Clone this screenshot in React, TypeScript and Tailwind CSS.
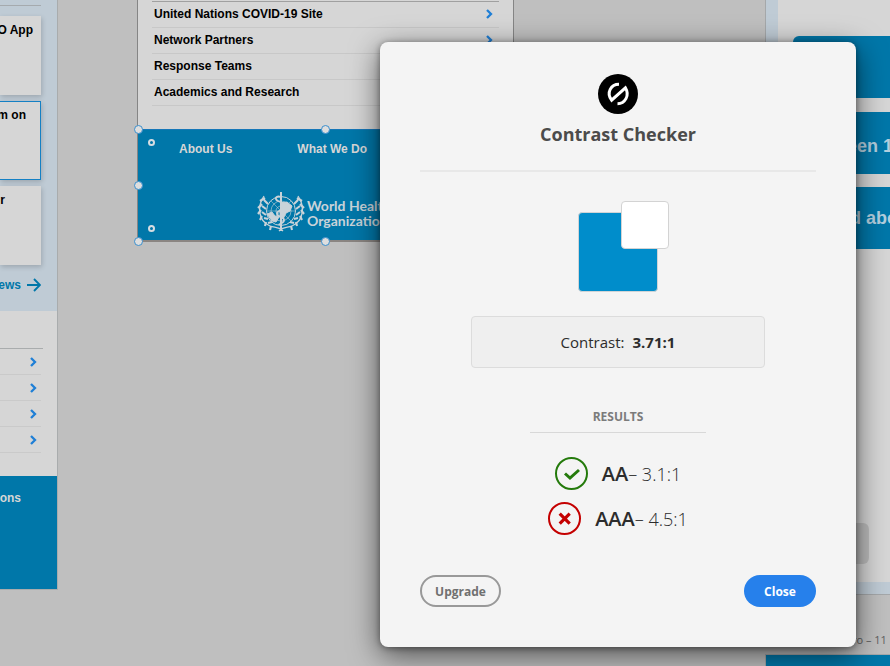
const newsCards = [
  { text: "O App", style: "pr-2 pt-[6px]" },
  { text: "m on", style: "border border-l-0 border-[#1480c4] pr-[14px] pt-[5px]" },
  { text: "r", style: "pr-9 pt-[6px]" },
];

const partnerLinks = [
  "United Nations COVID-19 Site",
  "Network Partners",
  "Response Teams",
  "Academics and Research",
];

const handles = [
  "-left-1 -top-[5px]",
  "-left-1 top-[51px]",
  "-left-1 top-[107px]",
  "left-[183px] -top-[5px]",
  "left-[183px] top-[107px]",
];

function Chevron() {
  return (
    <svg width="7" height="10" viewBox="0 0 7 10" fill="none" stroke="#1f7fd6" strokeWidth="2.3">
      <path d="M1 1L5 5L1 9" />
    </svg>
  );
}

function NewsArtboard() {
  return (
    <section className="absolute left-0 top-0 w-[58px] overflow-hidden border-b border-r border-[#a9acad] bg-[#d6d6d6] text-xs font-bold text-black">
      <div className="flex h-[311px] flex-col bg-[#bfcbd5] pr-4 pt-[5px]">
        <div className="mb-[10px] h-px shrink-0 bg-[#a5aaae]" />
        <div className="flex flex-col gap-[6px]">
          {newsCards.map((card) => (
            <article
              key={card.text}
              className={`flex h-[79px] justify-end whitespace-nowrap bg-[#d6d6d6] leading-4 shadow-[1px_2px_5px_#0000002e] ${card.style}`}
            >
              {card.text}
            </article>
          ))}
        </div>
        <a href="#news" className="mt-3 flex items-center justify-end gap-[6px] leading-4 text-[#0077a9]">
          ews
          <svg width="14" height="14" viewBox="0 0 14 14" fill="none" stroke="#0077a9" strokeWidth="1.9" className="shrink-0">
            <path d="M0 7H13M7 1L13 7L7 13" />
          </svg>
        </a>
      </div>
      <div className="h-[165px] pr-4 pt-[37px]">
        <div className="-mr-[2px] h-px bg-[#a9acad]" />
        {[1, 2, 3, 4].map((row) => (
          <div key={row} className="flex h-[26px] items-center justify-end border-b border-[#cacaca] pr-1">
            <Chevron />
          </div>
        ))}
      </div>
      <div className="flex h-[113px] justify-end bg-[#0077a9] pr-9 pt-[14px] leading-4 text-[#d6d6d6]">
        ons
      </div>
    </section>
  );
}

function Emblem() {
  return (
    <svg width="48" height="42" viewBox="0 0 48 42" fill="none" stroke="#c9d3d9" strokeWidth="1">
      <circle cx="24" cy="20" r="14.5" />
      <circle cx="24" cy="20" r="10" strokeOpacity=".6" />
      <circle cx="24" cy="20" r="5" strokeOpacity=".6" />
      <path d="M9.5 20H38.5M14 10L34 30M34 10L14 30" strokeOpacity=".5" />
      <path d="M10 23l5-2 3 4 4 1-3 5-4-1zM24 12l6-1 5 4-2 5-4 2-3 6-3-4z" fill="#c9d3d9" />
      <path d="M24 1V40" strokeWidth="2" />
      <path d="M24 6c-5-2-7 2-3 4s8 2 7 6-9 3-8 7 7 2 7 6-5 3-5 5" strokeWidth="1.8" />
      <path d="M7 5C0 15 1 30 13 35C18 37 21 35 26 40M41 5C48 15 47 30 35 35C30 37 27 35 22 40" strokeWidth="1.3" />
      <path
        d="M8 7L3 10M7 9L11 13M5 13L1 17M5 15L9 18M4 19L1 23M5 21L9 24M5 25L3 29M7 27L11 28M9 31L8 35M11 32L15 31M14 35L13 39M40 7L45 10M41 9L37 13M43 13L47 17M43 15L39 18M44 19L47 23M43 21L39 24M43 25L45 29M41 27L37 28M39 31L40 35M37 32L33 31M34 35L35 39"
        strokeWidth="2.1"
      />
    </svg>
  );
}

function PartnersArtboard() {
  return (
    <section className="absolute left-[137px] top-0 w-[377px] border-x border-[#858585] bg-[#d6d6d6]">
      <div className="h-[129px] px-[14px] pt-px">
        <ul className="border-t border-[#a0a0a0]">
          {partnerLinks.map((link) => (
            <li key={link} className="h-[26px] border-b border-[#c8c8c8]">
              <a href="#partners" className="flex h-full items-center justify-between pb-[2px] pl-[2px] pr-[6px] text-xs font-bold text-black">
                {link}
                <Chevron />
              </a>
            </li>
          ))}
        </ul>
      </div>
      <footer className="relative h-[113px] border-b-2 border-t border-b-[#8a8582] border-t-[#1677b8] bg-[#0077a9]">
        <nav className="flex gap-[65px] pl-[41px] pt-[11px] text-xs font-bold leading-4 text-[#d6d6d6]">
          <a href="#about">About Us</a>
          <a href="#work">What We Do</a>
        </nav>
        <div className="mt-[34px] flex items-center gap-[2px] pl-[119px]">
          <Emblem />
          <p className="whitespace-nowrap pt-[2px] font-['Lato',sans-serif] text-sm font-bold leading-[15px] text-[#c9d3d9]">
            World Health
            <br />
            Organization
          </p>
        </div>
        {handles.map((place) => (
          <span key={place} className={`absolute size-[9px] rounded-full border border-[#3a8fce] bg-[#dedede] ${place}`} />
        ))}
        <span className="absolute left-[10px] top-[9px] size-[7px] rounded-full border-2 border-[#d6dde2]" />
        <span className="absolute left-[10px] top-[95px] size-[7px] rounded-full border-2 border-[#d6dde2]" />
      </footer>
    </section>
  );
}

function AnswersArtboard() {
  return (
    <section className="absolute left-[765px] right-0 top-0 h-[595px] overflow-hidden border-b border-l border-[#a5a8aa] bg-[#bfcbd5] pb-3 pl-3">
      <div className="h-full bg-[#d6d6d6] pl-[15px] pt-9">
        <div className="flex flex-col gap-[13px] whitespace-nowrap text-lg font-bold text-[#b3cfdf]">
          <div className="mb-px h-[62px] rounded-l-md bg-[#0077a9]" />
          <div className="flex h-[62px] items-center rounded-l-md bg-[#0077a9] pl-[54px] pt-[5px]">een 1</div>
          <div className="flex h-[62px] items-center rounded-l-md bg-[#0077a9] pl-[57px]">d above</div>
        </div>
        <div className="mt-[274px] h-[41px] w-[76px] rounded-md bg-[#bdbdbd]" />
      </div>
    </section>
  );
}

function Logo() {
  return (
    <svg width="40" height="40" viewBox="0 0 40 40" fill="none">
      <circle cx="20" cy="20" r="20" fill="#000" />
      <path d="M21 10.3C13 10.3 8 18.5 13.6 26.2L27.4 13.8C32 21.5 27 29.7 19.5 29.7" stroke="#fff" strokeWidth="3" />
    </svg>
  );
}

function PassIcon() {
  return (
    <svg width="33" height="33" viewBox="0 0 33 33" fill="none" stroke="#247a0b">
      <circle cx="16.5" cy="16.5" r="15.5" strokeWidth="2" />
      <path d="M10 16.5L15 21L24 13" strokeWidth="3" />
    </svg>
  );
}

function FailIcon() {
  return (
    <svg width="33" height="33" viewBox="0 0 33 33" fill="none" stroke="#c40000">
      <circle cx="16.5" cy="16.5" r="15.5" strokeWidth="2" />
      <path d="M11.7 11.7L21.7 21.7M21.7 11.7L11.7 21.7" strokeWidth="3.2" />
    </svg>
  );
}

function ContrastDialog() {
  return (
    <div
      role="dialog"
      aria-labelledby="dialog-title"
      className="absolute left-[380px] top-[42px] flex w-[476px] flex-col items-center rounded-lg bg-[#f4f4f4] px-10 pb-10 pt-8 font-['Open_Sans',sans-serif] text-[#2c2c2c] shadow-[0_8px_30px_#00000099,0_1px_6px_#00000066]"
    >
      <Logo />
      <h1 id="dialog-title" className="mt-2 text-lg font-bold leading-6 text-[#4b4b4b]">
        Contrast Checker
      </h1>
      <hr className="mt-6 w-full border-t-2 border-[#e8e8e8]" />
      <div className="relative mt-10 size-20 rounded border border-[#d0d4d6] bg-[#008dcb]">
        <div className="absolute -top-3 left-[42px] size-12 rounded border border-[#d3d3d3] bg-white" />
      </div>
      <p className="mt-6 flex h-[52px] w-[294px] items-center justify-center gap-2 rounded border border-[#dcdcdc] bg-[#efefef] text-[15px] font-medium">
        Contrast: <strong className="font-bold">3.71:1</strong>
      </p>
      <h2 className="mt-[41px] w-44 border-b border-[#d8d8d8] pb-[7px] text-center text-xs font-bold leading-4 text-[#7b7b7b]">
        RESULTS
      </h2>
      <ul className="mt-6 flex flex-col items-center gap-3 text-lg">
        <li className="flex h-[33px] items-center gap-[14px]">
          <PassIcon />
          <span className="font-light">
            <b className="text-xl font-semibold">AA</b>– 3.1:1
          </span>
        </li>
        <li className="flex h-[33px] items-center gap-[14px]">
          <FailIcon />
          <span className="font-light">
            <b className="text-xl font-semibold">AAA</b>– 4.5:1
          </span>
        </li>
      </ul>
      <div className="mt-10 flex w-full justify-between text-xs font-bold">
        <button type="button" className="h-8 w-[81px] rounded-full border-2 border-[#999] pt-[2px] text-[#707070]">
          Upgrade
        </button>
        <button type="button" className="h-8 w-[72px] rounded-full bg-[#2680eb] pt-[2px] text-white">
          Close
        </button>
      </div>
    </div>
  );
}

export default function App() {
  return (
    <main className="relative h-screen w-full overflow-hidden bg-[#bfbfbf] font-['Liberation_Sans',Arial,sans-serif]">
      <NewsArtboard />
      <PartnersArtboard />
      <AnswersArtboard />
      <p className="absolute left-[852px] top-[632px] whitespace-nowrap font-['Open_Sans',sans-serif] text-[11px] leading-4 text-[#5e5e5e]">
        ro – 11
      </p>
      <section className="absolute bottom-0 left-[765px] right-0 h-3 border-l border-t border-[#a5a8aa] bg-[#0077a9]" />
      <ContrastDialog />
    </main>
  );
}
